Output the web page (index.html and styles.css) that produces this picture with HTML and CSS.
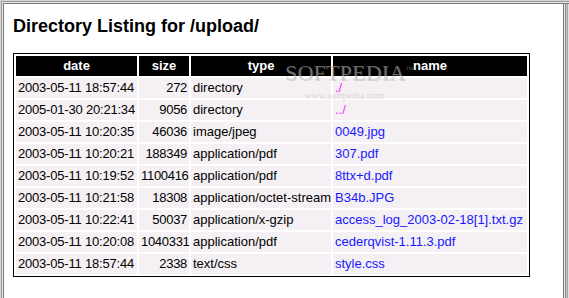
FILE: index.html
```html
<!DOCTYPE html>
<html lang="en">
<head>
<meta charset="UTF-8">
<meta name="viewport" content="width=device-width, initial-scale=1.0">
<title>Directory Listing for /upload/</title>
<link rel="stylesheet" href="styles.css">
</head>
<body>

<div class="window">
  <h1 class="title">Directory Listing for /upload/</h1>

  <table class="listing">
    <thead>
      <tr>
        <th class="c-date">date</th>
        <th class="c-size">size</th>
        <th class="c-type">type</th>
        <th class="c-name">name</th>
      </tr>
    </thead>
    <tbody>
      <tr>
        <td class="date">2003-05-11 18:57:44</td>
        <td class="size">272</td>
        <td class="type">directory</td>
        <td class="name"><a class="visited" href="#">./</a></td>
      </tr>
      <tr>
        <td class="date">2005-01-30 20:21:34</td>
        <td class="size">9056</td>
        <td class="type">directory</td>
        <td class="name"><a class="visited" href="#">../</a></td>
      </tr>
      <tr>
        <td class="date">2003-05-11 10:20:35</td>
        <td class="size">46036</td>
        <td class="type">image/jpeg</td>
        <td class="name"><a href="#">0049.jpg</a></td>
      </tr>
      <tr>
        <td class="date">2003-05-11 10:20:21</td>
        <td class="size">188349</td>
        <td class="type">application/pdf</td>
        <td class="name"><a href="#">307.pdf</a></td>
      </tr>
      <tr>
        <td class="date">2003-05-11 10:19:52</td>
        <td class="size">1100416</td>
        <td class="type">application/pdf</td>
        <td class="name"><a href="#">8ttx+d.pdf</a></td>
      </tr>
      <tr>
        <td class="date">2003-05-11 10:21:58</td>
        <td class="size">18308</td>
        <td class="type">application/octet-stream</td>
        <td class="name"><a href="#">B34b.JPG</a></td>
      </tr>
      <tr>
        <td class="date">2003-05-11 10:22:41</td>
        <td class="size">50037</td>
        <td class="type">application/x-gzip</td>
        <td class="name"><a href="#">access_log_2003-02-18[1].txt.gz</a></td>
      </tr>
      <tr>
        <td class="date">2003-05-11 10:20:08</td>
        <td class="size">1040331</td>
        <td class="type">application/pdf</td>
        <td class="name"><a href="#">cederqvist-1.11.3.pdf</a></td>
      </tr>
      <tr>
        <td class="date">2003-05-11 18:57:44</td>
        <td class="size">2338</td>
        <td class="type">text/css</td>
        <td class="name"><a href="#">style.css</a></td>
      </tr>
    </tbody>
  </table>

  <!-- screenshot watermark -->
  <div class="watermark">
    <span class="wm-brand">SOFTPEDIA</span><span class="wm-tm">™</span>
    <span class="wm-url">www.softpedia.com</span>
  </div>
</div>

</body>
</html>
```

FILE: styles.css
```css
html, body {
  margin: 0;
  padding: 0;
  background: #fff;
}
body {
  font-family: "Liberation Sans", Arial, Helvetica, sans-serif;
  color: #000;
}
.window {
  position: relative;
  box-sizing: border-box;
  height: 298px;
  padding: 16px 0 0 13px;
  /* sunken frame of the old browser window */
  box-shadow:
    inset 1px 1px 0 #d4d4d4,
    inset 2px 2px 0 #9c9c9c,
    inset 3px 3px 0 #e4e4e4,
    inset 4px 4px 0 #7c7c7c,
    inset -1px 0 0 #e2e2e2,
    inset -2px 0 0 #a6a6a6,
    inset -3px 0 0 #c8c8c8,
    inset -4px 0 0 #8a8a8a,
    inset -5px 0 0 #efefef,
    inset -6px 0 0 #767676;
}
.title {
  margin: 0 0 16px;
  font-size: 18px;
  line-height: 21px;
  font-weight: bold;
}
.listing {
  table-layout: fixed;
  width: 517px;
  border: 1px solid #000;
  border-spacing: 2px;
  font-size: 13px;
  line-height: 16px;
}
.listing th {
  background: #000;
  color: #fff;
  font-weight: bold;
  text-align: center;
  padding: 2px 2px;
}
.c-date { width: 117px; }
.c-size { width: 46px; }
.c-type { width: 136px; }
.c-name { width: 190px; }
.listing td {
  background: #f4f0f4;
  padding: 2px 2px;
  white-space: nowrap;
}
.listing td.date {
  letter-spacing: -0.2px;
}
.listing td.size {
  text-align: right;
  letter-spacing: -0.3px;
}
.listing a {
  color: #1818ff;
  text-decoration: none;
}
.listing a.visited {
  color: #ff22ff;
}
.watermark {
  position: absolute;
  left: 285px;
  top: 60px;
  width: 150px;
  font-family: "Liberation Serif", "Times New Roman", serif;
  color: rgba(190, 190, 190, 0.55);
  pointer-events: none;
}
.wm-brand {
  font-size: 22px;
  letter-spacing: 0.2px;
  text-shadow: 1px 1px 0 rgba(120, 120, 120, 0.25);
}
.wm-tm {
  position: relative;
  top: -8px;
  font-size: 8px;
  color: rgba(140, 140, 140, 0.6);
}
.wm-url {
  display: block;
  margin: 4px 0 0 19px;
  font-size: 10px;
  line-height: 12px;
}
```
